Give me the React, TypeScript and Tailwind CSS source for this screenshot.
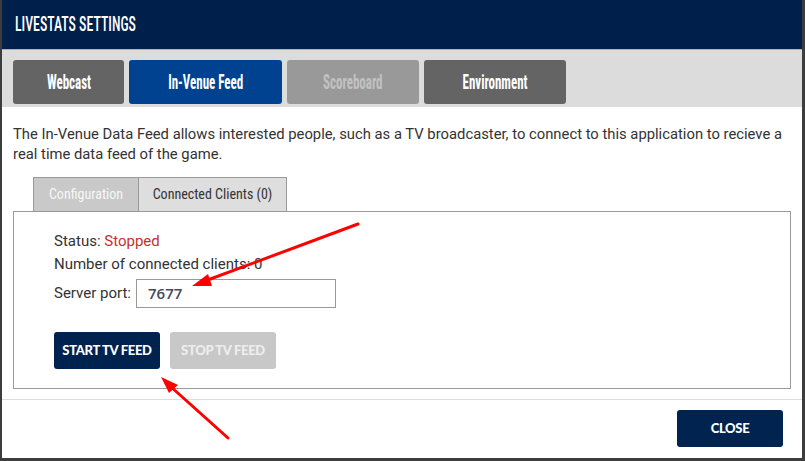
import React from 'react';

const cond = { fontFamily: '"Roboto Condensed", "Liberation Sans Narrow", "DejaVu Sans Condensed", Roboto, sans-serif' };
const body = { fontFamily: 'Roboto, sans-serif' };
const lato = { fontFamily: 'Lato, sans-serif' };

export default function App() {
  const tabs = [
    { label: 'Webcast', w: 'w-[111px]', cls: 'bg-[#646464] text-white' },
    { label: 'In-Venue Feed', w: 'w-[153px]', cls: 'bg-[#00428f] text-white' },
    { label: 'Scoreboard', w: 'w-[132px]', cls: 'bg-[#999999] text-[#c2c2c2]' },
    { label: 'Environment', w: 'w-[142px]', cls: 'bg-[#646464] text-white' },
  ];

  return (
    <div className="relative w-[805px] h-[461px] bg-[#3d3d3d] overflow-hidden">
      <div className="ml-[2px] w-[800px] h-[458px] bg-white flex flex-col">
        {/* header */}
        <div className="h-[50px] bg-[#00204c] border-b border-[#b0b0b0] flex items-center px-[13px]">
          <span className="inline-block origin-left scale-x-[0.66] text-white text-[21px] font-medium whitespace-nowrap" style={cond}>
            LIVESTATS SETTINGS
          </span>
        </div>

        {/* main tabs */}
        <div className="h-[57px] bg-[#dcdcdc] flex items-start gap-[5px] pl-[11px] pt-[10px]">
          {tabs.map((t) => (
            <div
              key={t.label}
              className={`${t.w} h-[44px] rounded-[3px] flex items-center justify-center ${t.cls}`}
              style={cond}
            >
              <span className="inline-block scale-x-[0.65] text-[20px] font-bold whitespace-nowrap">{t.label}</span>
            </div>
          ))}
        </div>

        <p className="px-[11px] pt-[17px] text-[14.8px] leading-[20px] text-[#333333]" style={body}>
          The In-Venue Data Feed allows interested people, such as a TV broadcaster, to connect to this application to recieve a real time data feed of the game.
        </p>

        {/* inner tabs */}
        <div className="flex pl-[31px] mt-[13px]">
          <div className="w-[106px] h-[34px] bg-[#c9c9c9] border border-b-0 border-[#999999] flex items-center justify-center text-[14px] text-[#f7f7f7]" style={cond}>
            Configuration
          </div>
          <div className="w-[148px] h-[34px] bg-[#dedede] border border-l-0 border-b-0 border-[#999999] flex items-center justify-center text-[14px] text-[#333333]" style={cond}>
            Connected Clients (0)
          </div>
        </div>

        {/* panel */}
        <div className="mx-[11px] h-[178px] border border-[#999999] pl-[40px] pt-[18px]" style={body}>
          <div className="text-[15px] leading-[23px] text-[#333333]">
            Status: <span className="text-[#c62f2f]">Stopped</span>
          </div>
          <div className="text-[15px] leading-[23px] text-[#333333]">Number of connected clients: 0</div>
          <div className="flex items-center gap-[5px] mt-[3px] text-[15px] text-[#333333]">
            <span>Server port:</span>
            <div className="w-[200px] h-[29px] border border-[#999999] flex items-center pl-[11px] text-[15px] font-semibold text-[#454a5c]" style={{ fontFamily: '"Open Sans", sans-serif' }}>
              7677
            </div>
          </div>
          <div className="flex gap-[10px] mt-[24px]" style={lato}>
            <div className="w-[106px] h-[37px] rounded-[3px] bg-[#00224f] text-white text-[13px] font-black tracking-[-0.3px] flex items-center justify-center">
              START TV FEED
            </div>
            <div className="w-[106px] h-[37px] rounded-[3px] bg-[#c8c8c8] text-[#eeeeee] text-[13px] font-black tracking-[-0.3px] flex items-center justify-center">
              STOP TV FEED
            </div>
          </div>
        </div>

        {/* footer */}
        <div className="mt-[10px] border-t border-[#dddddd] flex justify-end pr-[19px] pt-[10px]">
          <div className="w-[106px] h-[37px] rounded-[3px] bg-[#00234f] text-white text-[13px] font-black tracking-[-0.3px] flex items-center justify-center" style={lato}>
            CLOSE
          </div>
        </div>
      </div>

      {/* annotation arrows */}
      <svg className="absolute left-0 top-0 pointer-events-none" width="805" height="461">
        <line x1="358" y1="224" x2="205" y2="281" stroke="#ff0000" strokeWidth="3" strokeLinecap="round" />
        <polygon points="192,286 208,274 212,286" fill="#ff0000" />
        <line x1="228" y1="438" x2="170" y2="386" stroke="#ff0000" strokeWidth="3" strokeLinecap="round" />
        <polygon points="161,377 178,385 169,393" fill="#ff0000" />
      </svg>
    </div>
  );
}
